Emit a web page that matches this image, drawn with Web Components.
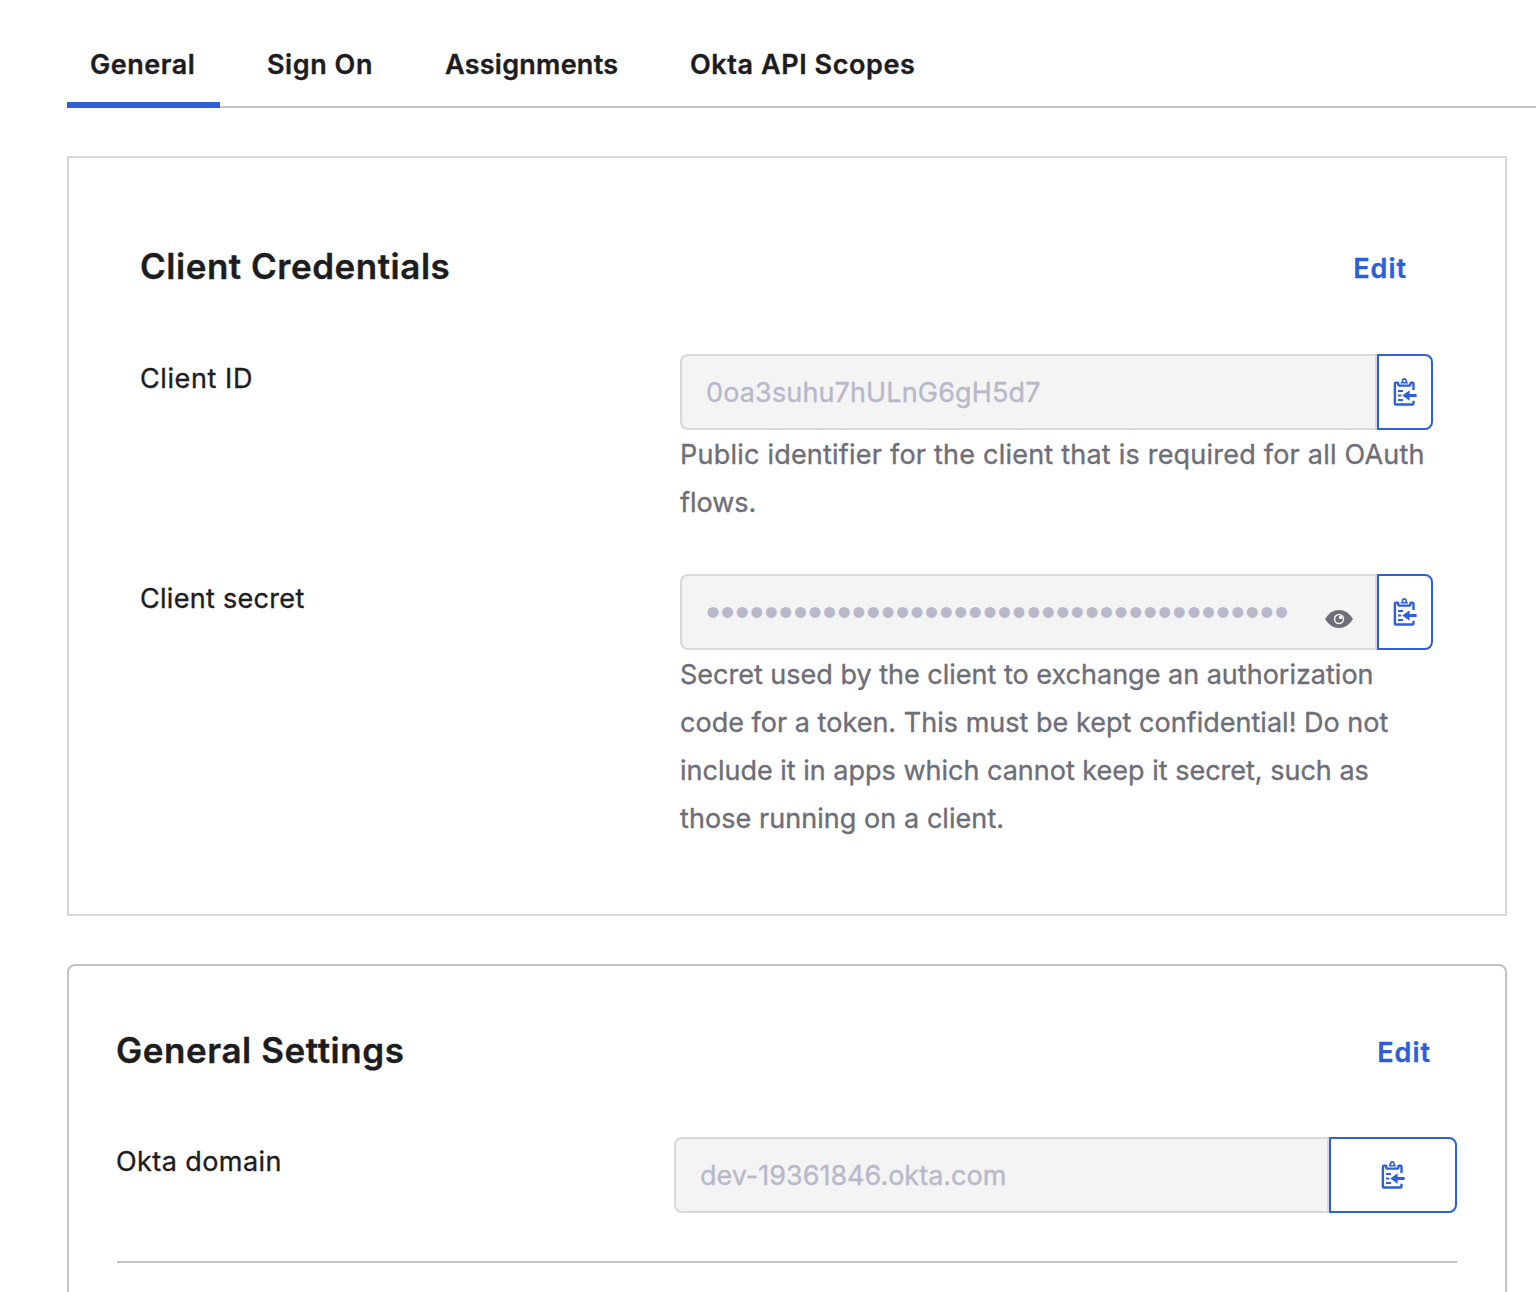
<!DOCTYPE html>
<html lang="en">
<head>
<meta charset="utf-8">
<title>Application settings</title>
<style>
html,body{margin:0;background:#fff}
body{width:1536px;height:1292px;overflow:hidden;font-family:Inter,"Liberation Sans",sans-serif;font-size:27px;line-height:48px;color:#1d1d21;-webkit-text-stroke:.35px currentColor}
</style>
</head>
<body>
<app-page>
  <tab-bar>
    <tab-item active style="width:153px;letter-spacing:.5px">General</tab-item>
    <tab-item style="width:154px;letter-spacing:.55px">Sign On</tab-item>
    <tab-item style="width:221px;letter-spacing:.25px">Assignments</tab-item>
    <tab-item style="width:273px;letter-spacing:.57px">Okta API Scopes</tab-item>
  </tab-bar>
  <settings-card class="credentials">
    <card-header><span slot="title" style="letter-spacing:.52px">Client Credentials</span></card-header>
    <form-row>
      <field-label style="letter-spacing:.6px">Client ID</field-label>
      <copy-field slot="control" style="letter-spacing:.14px">0oa3suhu7hULnG6gH5d7</copy-field>
      <help-line slot="control" style="letter-spacing:.22px">Public identifier for the client that is required for all OAuth</help-line>
      <help-line slot="control">flows.</help-line>
    </form-row>
    <form-row>
      <field-label style="letter-spacing:.3px">Client secret</field-label>
      <copy-field slot="control" secret>••••••••••••••••••••••••••••••••••••••••</copy-field>
      <help-line slot="control">Secret used by the client to exchange an authorization</help-line>
      <help-line slot="control" style="letter-spacing:.02px">code for a token. This must be kept confidential! Do not</help-line>
      <help-line slot="control">include it in apps which cannot keep it secret, such as</help-line>
      <help-line slot="control" style="letter-spacing:.06px">those running on a client.</help-line>
    </form-row>
  </settings-card>
  <settings-card class="general">
    <card-header><span slot="title" style="letter-spacing:.57px">General Settings</span></card-header>
    <form-row class="domain">
      <field-label style="letter-spacing:.42px">Okta domain</field-label>
      <copy-field slot="control" wide>dev-19361846.okta.com</copy-field>
    </form-row>
    <divider-line></divider-line>
  </settings-card>
</app-page>
<script>
const define = (name, markup) => customElements.define(name, class extends HTMLElement {
  constructor() {
    super();
    this.attachShadow({mode: "open"}).innerHTML = markup;
  }
});

define("app-page", `<style>
:host{display:flex;flex-direction:column;padding-left:67px;box-sizing:border-box;width:1536px;height:1292px;overflow:hidden}
::slotted(settings-card){flex:none;box-sizing:border-box;width:1440px;margin-top:48px}
::slotted(.credentials){height:760px;border:2px solid #d7d7dc;padding:84px 72px 0 71px;--edit-pad:25px;--control-left:540px}
::slotted(.general){height:400px;border:2px solid #c1c1c8;border-radius:8px;padding:60px 48px 0 47px;--edit-pad:25px;--control-left:558px}
</style><slot></slot>`);

define("tab-bar", `<style>
:host{display:flex;flex:none;gap:24px;height:108px;box-sizing:border-box;background:linear-gradient(#c1c1c8,#c1c1c8) bottom/100% 2px no-repeat}
</style><slot></slot>`);

define("tab-item", `<style>
:host{display:flex;box-sizing:border-box;height:108px;padding:41px 0 13px 23px;font-weight:600;white-space:nowrap;border-bottom:6px solid transparent}
:host([active]){border-bottom-color:#2c5fd8}
</style><slot></slot>`);

define("settings-card", `<style>
:host{display:flex;flex-direction:column}
</style><slot></slot>`);

define("card-header", `<style>
:host{display:flex;justify-content:space-between;align-items:center;height:50px;white-space:nowrap;font-weight:600}
h2{margin:0;font-size:35px;font-weight:600;line-height:48px;padding-bottom:2px}
a{color:#2c5fd8;letter-spacing:1px;padding-top:3px;margin-right:calc(var(--edit-pad) + 1px)}
</style><h2><slot name="title"></slot></h2><a>Edit</a>`);

define("form-row", `<style>
:host{display:grid;grid-template-columns:var(--control-left) 1fr;margin-top:62px}
:host(:nth-of-type(2)){margin-top:48px}
:host(.domain){margin-top:61px}
</style><div><slot></slot></div><div><slot name="control"></slot></div>`);

define("field-label", `<style>:host{display:block;white-space:nowrap;height:48px;line-height:50px}</style><slot></slot>`);

define("help-line", `<style>:host{display:block;color:#6e6e78;white-space:nowrap;height:48px;line-height:50px}</style><slot></slot>`);

define("clipboard-icon", `<style>:host{display:block;width:24px;height:28px}svg{display:block}</style>
<svg width="24" height="28" viewBox="0 0 24 28" fill="none" stroke="#2c5fd8">
<path stroke-width="2.4" d="M4.6 4.6H3Q1.9 4.6 1.9 5.7V25.4Q1.9 26.5 3 26.5H19.4Q20.5 26.5 20.5 25.4V22.8M20.5 12V5.7Q20.5 4.6 19.4 4.6H18"/>
<path stroke-width="2.3" d="M5 3.8V5.4Q5 7.6 7.2 7.6H15.4Q17.6 7.6 17.6 5.4V3.8"/>
<path fill="#2c5fd8" fill-rule="evenodd" stroke="none" d="M7.4 5.6Q7.4 4 8.5 3.7C8.6 1.4 9.6 0 11.3 0S14 1.4 14.1 3.7Q15.2 4 15.2 5.6ZM11.3 1.7Q10.1 1.8 10.1 3.9H12.5Q12.5 1.8 11.3 1.7Z"/>
<path stroke-width="2.2" d="M5 13H10M5 17.5H8.3M5 22H10"/>
<path fill="#2c5fd8" stroke="none" d="M9.3 17.5L16.6 12.2V15.9H23.6V19.1H16.6V22.8Z"/>
</svg>`);

define("eye-icon", `<style>:host{display:block;width:28px;height:18px}svg{display:block}</style>
<svg width="28" height="18" viewBox="0 0 28 18">
<path fill="#6e6e78" d="M0 9Q5.5 0 14 0T28 9Q22.5 18 14 18T0 9Z"/>
<circle cx="14" cy="9" r="4.5" fill="none" stroke="#f4f4f4" stroke-width="1.5"/>
<path fill="#f4f4f4" d="M14 6.2V8.2Q14.2 9 15 9H17.2L17.6 7 16 5.4Z"/>
</svg>`);

customElements.define("copy-field", class extends HTMLElement {
  constructor() {
    super();
    const secret = this.hasAttribute("secret");
    this.attachShadow({mode: "open"}).innerHTML = `<style>
:host{display:flex;height:76px;width:753px;--button:56px}
:host([wide]){width:783px;--button:128px}
.value{flex:1;display:flex;align-items:center;justify-content:space-between;box-sizing:border-box;border:2px solid #d7d7dc;border-radius:8px 0 0 8px;background:#f4f4f4;color:#b9b8cb;padding:0 22px 0 24px;white-space:nowrap}
.text{padding-top:2px}
:host([secret]) .text{padding:0;font-family:"Liberation Sans",sans-serif;font-size:40px;letter-spacing:.57px;-webkit-text-stroke:0}
eye-icon{margin-top:14px}
button{flex:none;display:flex;align-items:center;justify-content:center;box-sizing:border-box;width:var(--button);margin:0;padding:0;border:2px solid #2c5fd8;border-radius:0 8px 8px 0;background:#fff}
</style><div class="value"><span class="text"><slot></slot></span>${secret ? "<eye-icon></eye-icon>" : ""}</div><button type="button" aria-label="Copy"><clipboard-icon></clipboard-icon></button>`;
  }
});

define("divider-line", `<style>:host{display:block;height:2px;background:#c1c1c8;margin:48px 0 0 1px}</style>`);
</script>
</body>
</html>
